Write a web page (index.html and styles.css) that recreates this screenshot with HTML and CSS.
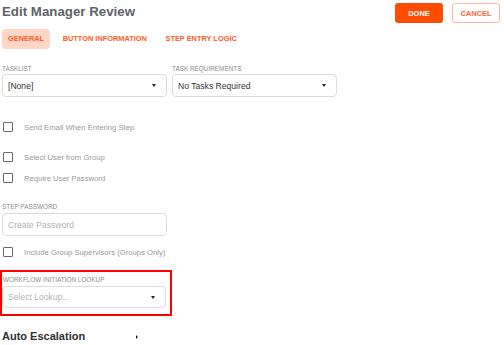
FILE: index.html
```html
<!DOCTYPE html>
<html lang="en">
<head>
  <meta charset="UTF-8" />
  <title>Edit Manager Review</title>
  <link rel="stylesheet" href="styles.css">
</head>
<body>
  <div class="page">

    <div class="header">
      <h1>Edit Manager Review</h1>
      <div class="actions">
        <button class="btn done">DONE</button>
        <button class="btn cancel">CANCEL</button>
      </div>
    </div>

    <div class="tabs">
      <div class="tab active">GENERAL</div>
      <div class="tab">BUTTON INFORMATION</div>
      <div class="tab">STEP ENTRY LOGIC</div>
    </div>

    <div class="field-row">
      <div class="field">
        <label>TASKLIST</label>
        <div class="select"><span>[None]</span><i class="caret"></i></div>
      </div>
      <div class="field">
        <label>TASK REQUIREMENTS</label>
        <div class="select"><span>No Tasks Required</span><i class="caret"></i></div>
      </div>
    </div>

    <div class="check first">
      <div class="box"></div>
      <span>Send Email When Entering Step</span>
    </div>
    <div class="check second">
      <div class="box"></div>
      <span>Select User from Group</span>
    </div>
    <div class="check third">
      <div class="box"></div>
      <span>Require User Password</span>
    </div>

    <div class="field password">
      <label>STEP PASSWORD</label>
      <div class="input placeholder">Create Password</div>
    </div>

    <div class="check fourth">
      <div class="box"></div>
      <span>Include Group Supervisors (Groups Only)</span>
    </div>

    <div class="highlight">
      <label>WORKFLOW INITIATION LOOKUP</label>
      <div class="select short"><span class="placeholder">Select Lookup...</span><i class="caret"></i></div>
    </div>

    <div class="section-title">
      <span>Auto Escalation</span>
      <i class="arrow"></i>
    </div>

  </div>
</body>
</html>
```

FILE: styles.css
```css
* {
  box-sizing: border-box;
  margin: 0;
  padding: 0;
}

body {
  font-family: 'Liberation Sans', Arial, sans-serif;
  background-color: #ffffff;
  color: #333;
  overflow: hidden;
}

.page {
  padding: 0 4px 0 2px;
}

.header {
  display: flex;
  justify-content: space-between;
  align-items: flex-start;
  height: 29px;
  padding-top: 3px;
}

h1 {
  font-size: 13.3px;
  line-height: 16px;
  margin-top: 1px;
  color: #606468;
  font-weight: bold;
}

.actions {
  display: flex;
  gap: 9px;
}

.btn {
  width: 48px;
  height: 20px;
  border-radius: 3px;
  font-family: inherit;
  font-size: 7.5px;
  font-weight: bold;
  cursor: pointer;
}

.done {
  background-color: #ff4c00;
  border: none;
  color: #fff;
}

.cancel {
  background-color: #fff;
  border: 1px solid #ffb49b;
  color: #ff6536;
}

.tabs {
  display: flex;
  gap: 6.5px;
  height: 20px;
}

.tab {
  padding: 0 6px;
  line-height: 20px;
  font-size: 7.4px;
  font-weight: 600;
  color: #ff5a24;
  border-radius: 4px;
}

.tab.active {
  background-color: #ffd6c8;
}

.field-row {
  display: flex;
  gap: 5px;
  margin-top: 15.5px;
}

.field {
  width: 165px;
}

label {
  display: block;
  font-size: 6.4px;
  line-height: 8px;
  color: #8c8c8c;
  margin-bottom: 1.5px;
}

.select, .input {
  display: flex;
  align-items: center;
  justify-content: space-between;
  height: 23px;
  padding: 0 10px 0 5px;
  border: 1px solid #dcdcdc;
  border-radius: 4px;
  font-size: 8.6px;
  color: #333;
}

.select.short {
  height: 22px;
}

.placeholder {
  color: #b4b4b4;
}

.caret {
  width: 0;
  height: 0;
  border-left: 2.5px solid transparent;
  border-right: 2.5px solid transparent;
  border-top: 3px solid #222;
}

.check {
  display: flex;
  align-items: center;
  gap: 11px;
  height: 10px;
  padding-left: 1px;
  font-size: 7.7px;
  color: #9a9a9a;
}

.box {
  width: 10px;
  height: 10px;
  border: 1.3px solid #6a6a6a;
  border-radius: 1px;
}

.check.first {
  margin-top: 25px;
}

.check.second {
  margin-top: 20px;
}

.check.third {
  margin-top: 11px;
}

.field.password {
  margin-top: 19.5px;
}

.field.password label {
  margin-bottom: 2.5px;
}

.check.fourth {
  margin-top: 11px;
}

.highlight {
  width: 172px;
  margin: 13px 0 0 -2px;
  padding: 3.5px 4px 6px 0;
  border: 2px solid #ff0000;
}

.highlight label {
  padding-left: 1px;
  margin-bottom: 2.5px;
}

.section-title {
  display: flex;
  justify-content: space-between;
  align-items: center;
  width: 136px;
  margin-top: 13.6px;
  font-size: 11px;
  line-height: 13px;
  font-weight: bold;
  color: #2f2f2f;
}

.arrow {
  width: 0;
  height: 0;
  border-top: 2px solid transparent;
  border-bottom: 2px solid transparent;
  border-left: 2.5px solid #222;
  margin-top: 2px;
}
```
